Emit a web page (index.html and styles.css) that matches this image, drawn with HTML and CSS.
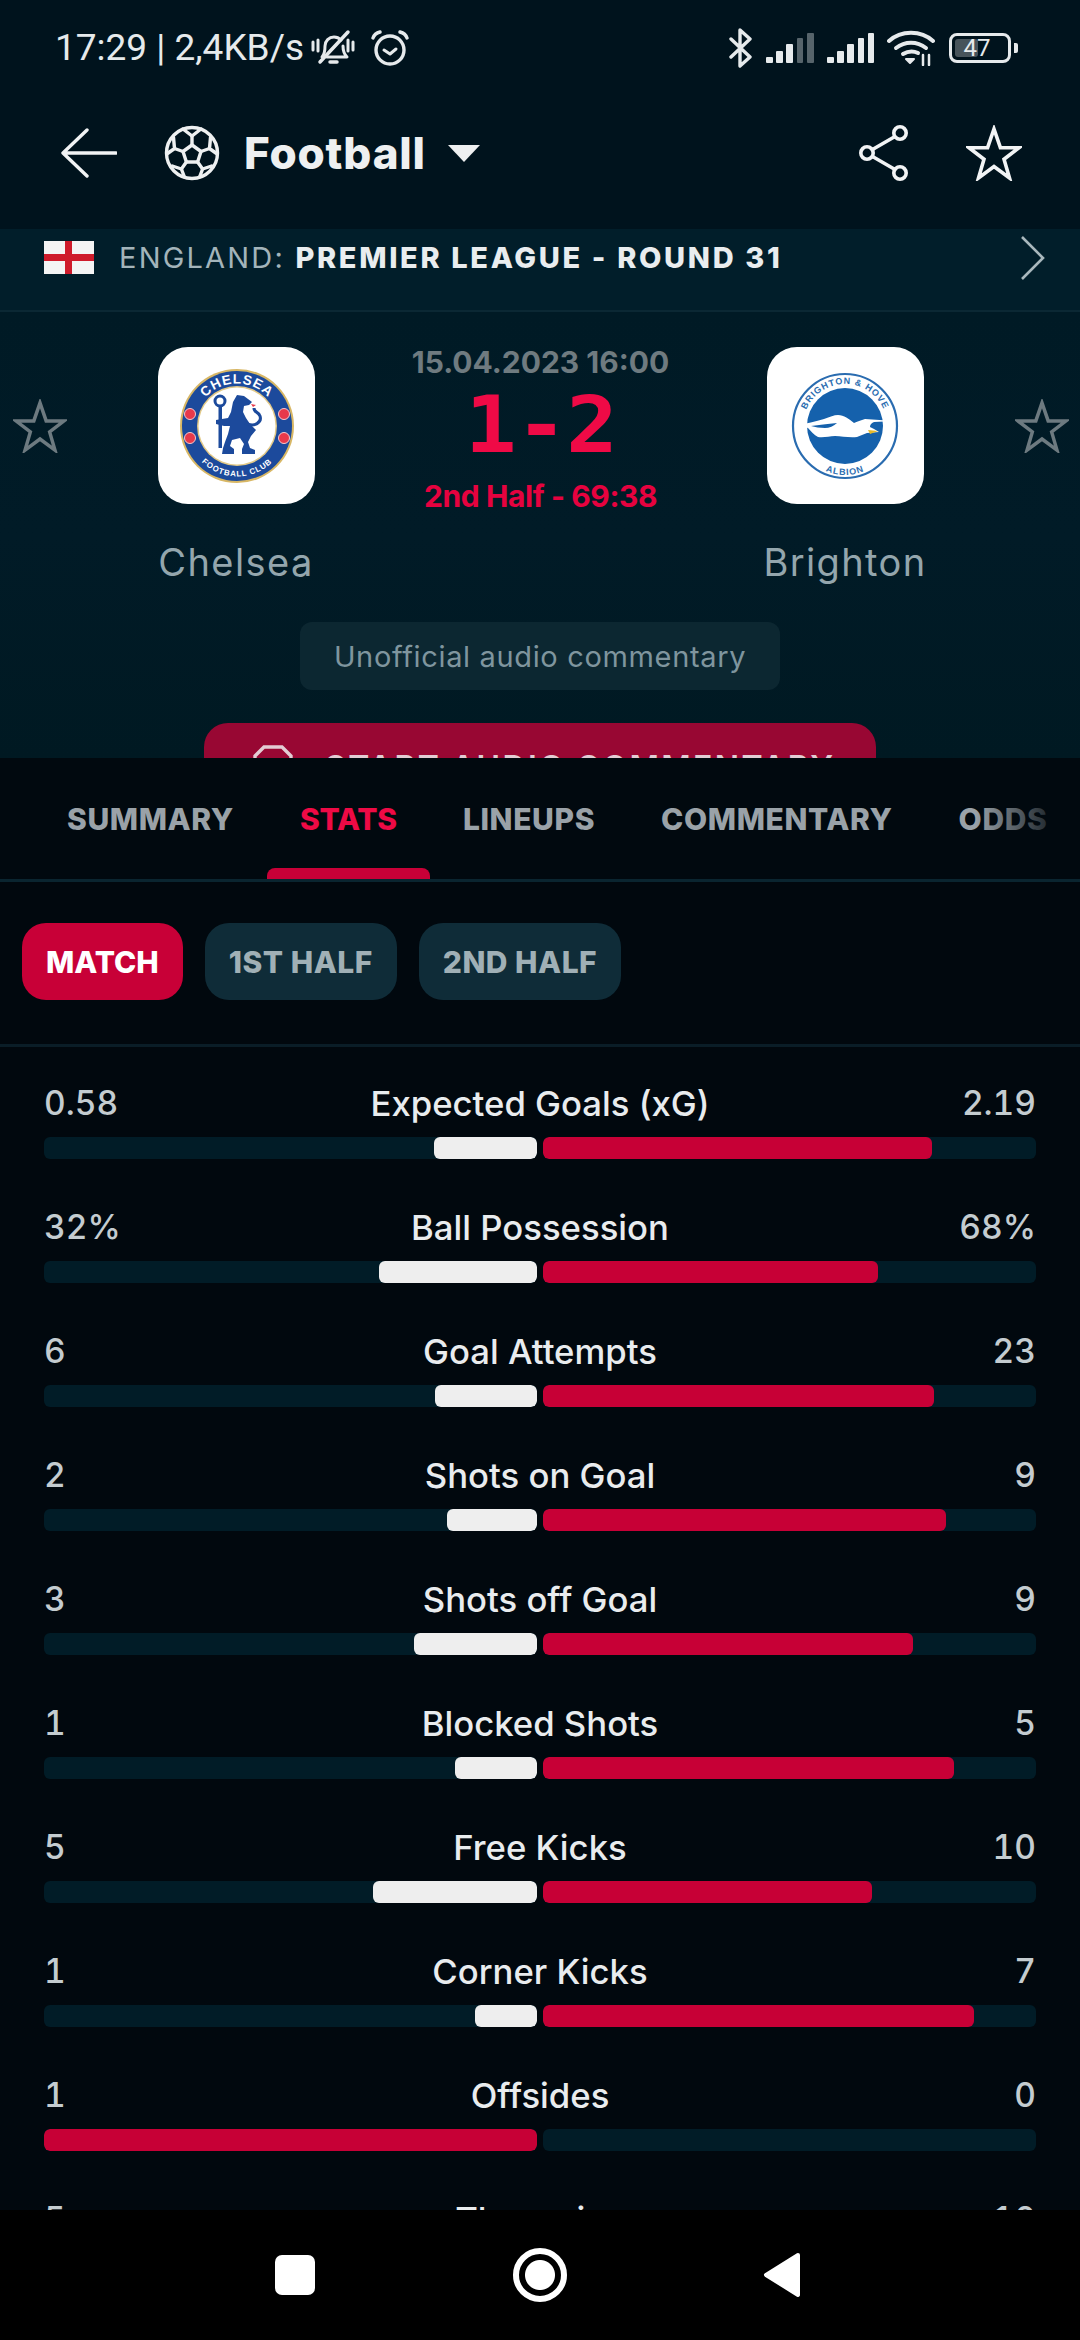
FILE: index.html
```html
<!DOCTYPE html>
<html lang="en">
<head>
<meta charset="utf-8">
<title>Chelsea - Brighton</title>
<link rel="stylesheet" href="styles.css">
</head>
<body>
<div class="screen">
  <header class="top">
    <div class="status">
      <div class="status-left">
        <span class="clock">17:29 | 2,4KB/s</span>
        <svg class="ic-bell" viewBox="0 0 44 38" fill="none" stroke="#e6eaec" stroke-width="3" stroke-linecap="round" stroke-linejoin="round"><path d="M11 28c3-3 3-7 3-11 0-5 4-9 9-9 3 0 5 1 7 3"/><path d="M32 17c0 4 1 8 4 11H16"/><path d="M19 33h7" stroke-width="3.5"/><path d="M9 33 37 3" stroke-width="3.5"/><path d="M2 13v8M7 11v11M37 11v11M42 13v8"/></svg>
        <svg class="ic-alarm" viewBox="0 0 40 36" fill="none" stroke="#e6eaec" stroke-width="3.4" stroke-linecap="round" stroke-linejoin="round"><circle cx="20" cy="20" r="14"/><path d="M14 20l6 4 6-5" stroke-width="3"/><path d="M3 8c1-3 3-5 7-6M37 8c-1-3-3-5-7-6"/></svg>
      </div>
      <div class="status-right">
        <svg class="ic-bt" viewBox="0 0 24 40" fill="none" stroke="#e6eaec" stroke-width="3.4" stroke-linecap="round" stroke-linejoin="round"><path d="M2 11 21 29 11 38V2l10 9L2 29"/></svg>
        <svg class="ic-sig" viewBox="0 0 48 30"><rect y="24" width="7" height="6" rx="1" fill="#e6eaec"/><rect x="10" y="18" width="7" height="12" rx="1" fill="#e6eaec"/><rect x="20" y="11" width="7" height="19" rx="1" fill="#e6eaec"/><rect x="31" y="5" width="6" height="25" rx="1" fill="#56646b"/><rect x="41" width="7" height="30" rx="1" fill="#56646b"/></svg>
        <svg class="ic-sig" viewBox="0 0 48 30" fill="#e6eaec"><rect y="24" width="7" height="6" rx="1"/><rect x="10" y="18" width="7" height="12" rx="1"/><rect x="20" y="11" width="7" height="19" rx="1"/><rect x="31" y="5" width="6" height="25" rx="1"/><rect x="41" width="6" height="30" rx="1"/></svg>
        <svg class="ic-wifi" viewBox="0 0 48 36" fill="none" stroke="#e6eaec" stroke-width="4" stroke-linecap="round"><path d="M2 11c12-11 32-11 44 0"/><path d="M9 18c9-7 21-7 30 0"/><path d="M16 24c5-3 11-3 15-1"/><path d="M19 29l4 4 4-4z" fill="#e6eaec" stroke-width="2" stroke-linejoin="round"/><path d="M36 25v10M42 25v10" stroke-width="2.5"/></svg>
        <div class="battery"><div class="batt-body"><div class="batt-fill"></div><span class="batt-num">47</span></div><div class="batt-tip"></div></div>
      </div>
    </div>
    <div class="nav-head">
      <svg class="ic-back" viewBox="0 0 56 50" fill="none" stroke="#f2f4f5" stroke-width="3.4" stroke-linecap="round" stroke-linejoin="round"><path d="M26 2 2 25l24 23M3 25h52"/></svg>
      <svg class="ic-ball" viewBox="0 0 56 56" fill="none" stroke="#eef0f1" stroke-width="3.4" stroke-linejoin="round" stroke-linecap="round"><circle cx="28" cy="28" r="25.5"/><path d="M28 20l9 6.5-3.4 10.5H22.400l-3.400-10.500z"/><path d="M28 20v-9M37 26.500l8.500-3M33.600 37l5 7M22.400 37l-5 7M19 26.500l-8.500-3"/><path d="M28 11l-9-7M28 11l9-7M45.500 23.500l1-11M45.500 23.500l7 5M38.600 44l9-3M38.600 44l-3 8M17.400 44l-9-3M17.400 44l3 8M10.500 23.500l-1-11M10.500 23.500l-7 5"/></svg>
      <span class="sport">Football</span>
      <span class="caret"></span>
      <div class="head-actions">
        <svg class="ic-share" viewBox="0 0 50 56" fill="none" stroke="#f2f4f5" stroke-width="3.6"><circle cx="8" cy="28" r="6.200"/><circle cx="41" cy="8" r="6.200"/><circle cx="41" cy="48" r="6.200"/><path d="M13.500 24.500 36 11.500M13.500 31.500 36 44.500"/></svg>
        <svg class="ic-star" viewBox="0 0 56 56" fill="none" stroke="#f2f4f5" stroke-width="3.600" stroke-linejoin="miter"><path d="M28 4l6.400 18.700H53L38 34.200 43.500 53 28 41.500 12.500 53 18 34.200 3 22.700h18.600z"/></svg>
      </div>
    </div>
  </header>

  <div class="league">
    <svg class="flag" viewBox="0 0 50 33"><rect width="50" height="33" fill="#f4f4f4"/><rect x="21" width="7" height="33" fill="#cf1b2b"/><rect y="13" width="50" height="7" fill="#cf1b2b"/></svg>
    <span class="league-name">ENGLAND: <b>PREMIER LEAGUE - ROUND 31</b></span>
    <svg class="chev" viewBox="0 0 24 44" fill="none" stroke="#a9b8bd" stroke-width="2.600"><path d="M1 1l21 21L1 43"/></svg>
  </div>

  <section class="match">
    <div class="teams">
      <svg class="side-star" viewBox="0 0 56 56" fill="none" stroke="#6d7a80" stroke-width="3.600"><path d="M28 4l6.400 18.700H53L38 34.200 43.500 53 28 41.500 12.500 53 18 34.200 3 22.700h18.600z"/></svg>
      <div class="team">
        <div class="logo">
          <svg viewBox="0 0 157 157">
            <defs>
              <path id="ch-top" d="M36.500 79a42.500 42.500 0 0 1 85 0"/>
              <path id="ch-bot" d="M28.500 79a50.500 50.500 0 0 0 101 0"/>
            </defs>
            <circle cx="79" cy="79" r="57" fill="#d8b765"/>
            <circle cx="79" cy="79" r="55" fill="#1c4a9c"/>
            <circle cx="79" cy="79" r="40" fill="#e2c987"/>
            <circle cx="79" cy="79" r="38.500" fill="#fff"/>
            <text class="crest-t ch-main"><textPath href="#ch-top" startOffset="50%" text-anchor="middle">CHELSEA</textPath></text>
            <text class="crest-t ch-sub"><textPath href="#ch-bot" startOffset="50%" text-anchor="middle">FOOTBALL CLUB</textPath></text>
            <g fill="#e8394a" stroke="#f6c9cc" stroke-width="1"><circle cx="32" cy="67" r="5.500"/><circle cx="126" cy="67" r="5.500"/><circle cx="32" cy="91" r="5.500"/><circle cx="126" cy="91" r="5.500"/></g>
            <g fill="#1c4a9c">
              <path d="M75 55l4-7 7 1 8 6-3 3-5 1-1 6 3 6 4 6 6 6-5 6-3 6 2 6 5 2v4H84v-5l2-5-4-6-8 2-2 6 4 3v5H64l1-6 2-6 3-8 2-8-6 0-8-2v-4l12-2 3-6z"/>
              <circle cx="62" cy="54" r="5" fill="none" stroke="#1c4a9c" stroke-width="3"/>
              <rect x="60.500" y="59" width="3.500" height="42"/>
              <path d="M87 76c10 5 17-1 15-7-2-5-6-3-6-8" fill="none" stroke="#1c4a9c" stroke-width="3"/>
            </g>
            <path d="M93 57l5 1-3 2z" fill="#e8394a"/>
          </svg>
        </div>
        <span class="team-name">Chelsea</span>
      </div>
      <div class="score-box">
        <span class="date">15.04.2023 16:00</span>
        <span class="score">1-2</span>
        <span class="period">2nd Half - 69:38</span>
      </div>
      <div class="team">
        <div class="logo">
          <svg viewBox="0 0 157 157">
            <defs>
              <path id="br-top" d="M36 79a42 42 0 0 1 84 0"/>
              <path id="br-bot" d="M29 79a49 49 0 0 0 98 0"/>
            </defs>
            <circle cx="78" cy="79" r="52" fill="#fff" stroke="#2a6cb0" stroke-width="2.200"/>
            <circle cx="78" cy="79" r="38" fill="#1561ac"/>
            <text class="crest-b"><textPath href="#br-top" startOffset="50%" text-anchor="middle">BRIGHTON &amp; HOVE</textPath></text>
            <text class="crest-b"><textPath href="#br-bot" startOffset="50%" text-anchor="middle">ALBION</textPath></text>
            <path fill="#fff" d="M29 78c10-1 20-4 28-6 6-2 10-4 14-4 6 0 11 4 16 8 3-1 7-3 11-4l29 2-20 1c-3 1-4 3-4 5l4 2 5 3-12 1-10 4c-8 1-15-1-22-1-6 0-11 2-17 1-4-2-7-6-10-9-4-1-8-2-12-3z"/>
            <path fill="#1561ac" d="M44 79c8-1 16-2 26-3-3 3-8 5-12 5-5 0-10-1-14-2z"/>
            <path fill="#e5b92a" d="M101 83l10 1-8 3z"/>
          </svg>
        </div>
        <span class="team-name">Brighton</span>
      </div>
      <svg class="side-star" viewBox="0 0 56 56" fill="none" stroke="#6d7a80" stroke-width="3.600"><path d="M28 4l6.400 18.700H53L38 34.200 43.500 53 28 41.500 12.500 53 18 34.200 3 22.700h18.600z"/></svg>
    </div>
    <div class="audio-note">Unofficial audio commentary</div>
    <div class="audio-btn">
      <svg class="ic-mic" viewBox="0 0 40 36" fill="none" stroke="#e3ccd4" stroke-width="3.400"><path d="M2 36V12l9-9h18l9 9v24"/></svg>
      <span>START AUDIO COMMENTARY</span>
    </div>
  </section>

  <nav class="tabs">
    <span class="tab">SUMMARY</span>
    <span class="tab active">STATS</span>
    <span class="tab">LINEUPS</span>
    <span class="tab">COMMENTARY</span>
    <span class="tab">ODDS</span>
  </nav>

  <div class="filters">
    <span class="pill on">MATCH</span>
    <span class="pill">1ST HALF</span>
    <span class="pill">2ND HALF</span>
  </div>

  <main class="stats">
    <div class="stat"><div class="stat-head"><span class="val">0.58</span><span class="label">Expected Goals (xG)</span><span class="val">2.19</span></div><div class="bars"><div class="track home"><i class="fill white" style="width:103px"></i></div><div class="track"><i class="fill red" style="width:389px"></i></div></div></div>
    <div class="stat"><div class="stat-head"><span class="val">32%</span><span class="label">Ball Possession</span><span class="val">68%</span></div><div class="bars"><div class="track home"><i class="fill white" style="width:158px"></i></div><div class="track"><i class="fill red" style="width:335px"></i></div></div></div>
    <div class="stat"><div class="stat-head"><span class="val">6</span><span class="label">Goal Attempts</span><span class="val">23</span></div><div class="bars"><div class="track home"><i class="fill white" style="width:102px"></i></div><div class="track"><i class="fill red" style="width:391px"></i></div></div></div>
    <div class="stat"><div class="stat-head"><span class="val">2</span><span class="label">Shots on Goal</span><span class="val">9</span></div><div class="bars"><div class="track home"><i class="fill white" style="width:90px"></i></div><div class="track"><i class="fill red" style="width:403px"></i></div></div></div>
    <div class="stat"><div class="stat-head"><span class="val">3</span><span class="label">Shots off Goal</span><span class="val">9</span></div><div class="bars"><div class="track home"><i class="fill white" style="width:123px"></i></div><div class="track"><i class="fill red" style="width:370px"></i></div></div></div>
    <div class="stat"><div class="stat-head"><span class="val">1</span><span class="label">Blocked Shots</span><span class="val">5</span></div><div class="bars"><div class="track home"><i class="fill white" style="width:82px"></i></div><div class="track"><i class="fill red" style="width:411px"></i></div></div></div>
    <div class="stat"><div class="stat-head"><span class="val">5</span><span class="label">Free Kicks</span><span class="val">10</span></div><div class="bars"><div class="track home"><i class="fill white" style="width:164px"></i></div><div class="track"><i class="fill red" style="width:329px"></i></div></div></div>
    <div class="stat"><div class="stat-head"><span class="val">1</span><span class="label">Corner Kicks</span><span class="val">7</span></div><div class="bars"><div class="track home"><i class="fill white" style="width:62px"></i></div><div class="track"><i class="fill red" style="width:431px"></i></div></div></div>
    <div class="stat"><div class="stat-head"><span class="val">1</span><span class="label">Offsides</span><span class="val">0</span></div><div class="bars"><div class="track home"><i class="fill red" style="width:493px"></i></div><div class="track"></div></div></div>
    <div class="stat"><div class="stat-head"><span class="val">5</span><span class="label">Throw-ins</span><span class="val">10</span></div></div>
  </main>

  <footer class="sysnav">
    <span class="sys-square"></span>
    <span class="sys-circle"></span>
    <svg class="sys-back" viewBox="0 0 38 46"><path d="M35 3 3 23l32 20z" fill="#fff" stroke="#fff" stroke-width="4" stroke-linejoin="round"/></svg>
  </footer>
</div>
</body>
</html>
```
FILE: styles.css
```css
* { box-sizing: border-box; }
html, body { margin: 0; padding: 0; background: #01080e; }
body { font-family: Inter, "Noto Sans", sans-serif; }
.screen { width: 1080px; height: 2340px; display: flex; flex-direction: column; overflow: hidden; background: #01080e; }

/* status + app header */
.top { height: 229px; flex: none; background: #00131d; display: flex; flex-direction: column; }
.status { height: 92px; display: flex; justify-content: space-between; align-items: center; padding: 3px 62px 0 55px; flex: none; }
.status-left, .status-right { display: flex; align-items: center; }
.clock { font: 400 37px/1 Roboto, sans-serif; color: #e6eaec; white-space: nowrap; }
.ic-bell { width: 44px; height: 38px; margin-left: 7px; }
.ic-alarm { width: 40px; height: 36px; margin-left: 15px; }
.ic-bt { width: 24px; height: 40px; }
.ic-sig { width: 48px; height: 30px; margin-left: 13px; }
.ic-wifi { width: 48px; height: 36px; margin-left: 12px; }
.battery { display: flex; align-items: center; margin-left: 14px; }
.batt-body { position: relative; width: 62px; height: 30px; border: 3px solid #e6eaec; border-radius: 8px; display: flex; align-items: center; justify-content: center; }
.batt-fill { position: absolute; left: 3px; top: 3px; bottom: 3px; width: 23px; background: #47545b; border-radius: 3px; }
.batt-num { position: relative; font: 400 24px/1 Roboto, sans-serif; color: #e6eaec; margin-left: -6px; }
.batt-tip { width: 4px; height: 10px; margin-left: 3px; background: #e6eaec; border-radius: 0 2px 2px 0; }

.nav-head { flex: 1; display: flex; align-items: center; padding: 0 58px 15px 61px; }
.ic-back { width: 56px; height: 50px; }
.ic-ball { width: 56px; height: 56px; margin-left: 47px; }
.sport { font-size: 44px; font-weight: 800; color: #eef0f1; margin-left: 24px; letter-spacing: 0.8px; }
.caret { width: 0; height: 0; border-left: 16px solid transparent; border-right: 16px solid transparent; border-top: 17px solid #eef0f1; margin-left: 22px; }
.head-actions { margin-left: auto; display: flex; align-items: center; gap: 57px; }
.ic-share { width: 50px; height: 56px; }
.ic-star { width: 56px; height: 56px; }

/* league row */
.league { height: 83px; flex: none; background: #011e2a; border-bottom: 2px solid #0b2834; display: flex; align-items: center; padding: 0 35px 24px 44px; }
.flag { width: 50px; height: 33px; flex: none; }
.league-name { margin-left: 25px; font-size: 29px; letter-spacing: 2.2px; color: #a3b4ba; font-weight: 400; white-space: nowrap; }
.league-name b { font-weight: 800; color: #e9edef; letter-spacing: 2.65px; }
.chev { width: 24px; height: 44px; margin-left: auto; }

/* match */
.match { height: 446px; flex: none; overflow: hidden; background: linear-gradient(#001a25, #011b27 50%, #001922); display: flex; flex-direction: column; align-items: center; }
.teams { width: 100%; display: flex; padding: 35px 11px 0 13px; }
.side-star { width: 54px; height: 54px; flex: none; margin: 52px 69px 0 0; }
.team { width: 200px; flex: none; display: flex; flex-direction: column; align-items: center; }
.team + .side-star { margin: 52px 0 0 70px; }
.logo { width: 157px; height: 157px; border-radius: 30px; background: #fff; overflow: hidden; flex: none; }
.logo svg { display: block; width: 157px; height: 157px; }
.crest-t { font-family: "Liberation Sans", sans-serif; font-weight: 700; fill: #fff; }
.ch-main { font-size: 13.500px; letter-spacing: 1px; }
.ch-sub { font-size: 8px; letter-spacing: 0.8px; }
.crest-b { font-family: "Liberation Sans", sans-serif; font-weight: 700; fill: #2a6cb0; font-size: 9px; letter-spacing: 0.9px; }
.team-name { margin-top: 35px; font-size: 38px; line-height: 46px; letter-spacing: 1.4px; color: #94a6ad; white-space: nowrap; }
.score-box { flex: 1; display: flex; flex-direction: column; align-items: center; margin-top: -3px; }
.date { font-size: 30px; line-height: 36px; font-weight: 700; color: #6f7b80; white-space: nowrap; }
.score { font: 700 78px/91px "DejaVu Sans Mono", monospace; color: #ef0a46; letter-spacing: -1px; transform: scaleX(1.1); }
.period { font-size: 30px; line-height: 36px; font-weight: 700; color: #e6023f; white-space: nowrap; letter-spacing: -0.4px; margin-top: 7px; }
.audio-note { margin-top: 37px; width: 480px; height: 68px; flex: none; border-radius: 12px; background: #0c2731; color: #7f959e; font-size: 29px; display: flex; align-items: center; justify-content: center; letter-spacing: 0.65px; white-space: nowrap; }
.audio-btn { margin-top: 33px; width: 672px; height: 72px; flex: none; border-radius: 24px; background: #980733; display: flex; align-items: flex-start; padding: 21px 0 0 49px; }
.ic-mic { width: 40px; height: 36px; flex: none; }
.audio-btn span { margin-left: 32px; margin-top: 8px; font-size: 32px; line-height: 1; font-weight: 600; letter-spacing: 2.35px; color: #e3ccd4; white-space: nowrap; }

/* tabs */
.tabs { position: relative; height: 124px; flex: none; display: flex; padding: 0 0 0 34px; background: #01090f; border-bottom: 3px solid #0a2530; overflow: hidden; }
.tabs::after { content: ""; position: absolute; top: 0; bottom: 0; left: 975px; width: 105px; background: linear-gradient(90deg, rgba(1,9,15,0) 0%, #01090f 90%); }
.tab { position: relative; flex: none; padding: 0 33px; display: flex; align-items: center; font-size: 30px; font-weight: 800; letter-spacing: 0.6px; color: #9aa2a8; white-space: nowrap; }
.tab.active { color: #ee0a45; letter-spacing: -0.2px; }
.tab.active::after { content: ""; position: absolute; left: 0; right: 0; bottom: 0; height: 11px; background: #c80037; border-radius: 8px 8px 0 0; }

/* filter pills */
.filters { height: 165px; flex: none; display: flex; gap: 22px; padding: 41px 0 0 22px; border-bottom: 3px solid #0a1d27; background: #01080e; align-items: flex-start; }
.pill { height: 77px; padding: 0 24px; display: flex; align-items: center; border-radius: 24px; background: #0f2c38; color: #a0b0b6; font-size: 30px; font-weight: 800; white-space: nowrap; letter-spacing: 0.5px; }
.pill.on { background: #c80037; color: #fff; letter-spacing: 0; }

/* statistics */
.stats { flex: 1; min-height: 0; overflow: hidden; padding: 36px 44px 0; display: flex; flex-direction: column; gap: 48px; }
.stat { flex: none; display: flex; flex-direction: column; gap: 14px; }
.stat-head { height: 40px; display: flex; align-items: center; justify-content: space-between; position: relative; }
.val { font-size: 33.500px; font-weight: 500; color: #c4ccd0; font-feature-settings: "tnum"; }
.label { font-size: 34.700px; font-weight: 500; color: #e9ecee; position: absolute; left: 0; right: 0; text-align: center; white-space: nowrap; }
.bars { display: grid; grid-template-columns: 493px 493px; gap: 6px; }
.track { height: 22px; background: #011c27; border-radius: 6px; display: flex; overflow: hidden; }
.track.home { justify-content: flex-end; }
.fill { display: block; height: 100%; border-radius: 6px; }
.fill.white { background: #eeeeee; }
.fill.red { background: #c70036; }

/* system nav */
.sysnav { height: 130px; flex: none; background: #000; position: relative; }
.sys-square { position: absolute; left: 275px; top: 45px; width: 40px; height: 40px; border-radius: 7px; background: #fff; }
.sys-circle { position: absolute; left: 513px; top: 38px; width: 54px; height: 54px; border-radius: 50%; border: 6px solid #fff; background: radial-gradient(circle, #fff 0 14.500px, #000 15.500px); }
.sys-back { position: absolute; left: 763px; top: 42px; width: 38px; height: 46px; }
```
